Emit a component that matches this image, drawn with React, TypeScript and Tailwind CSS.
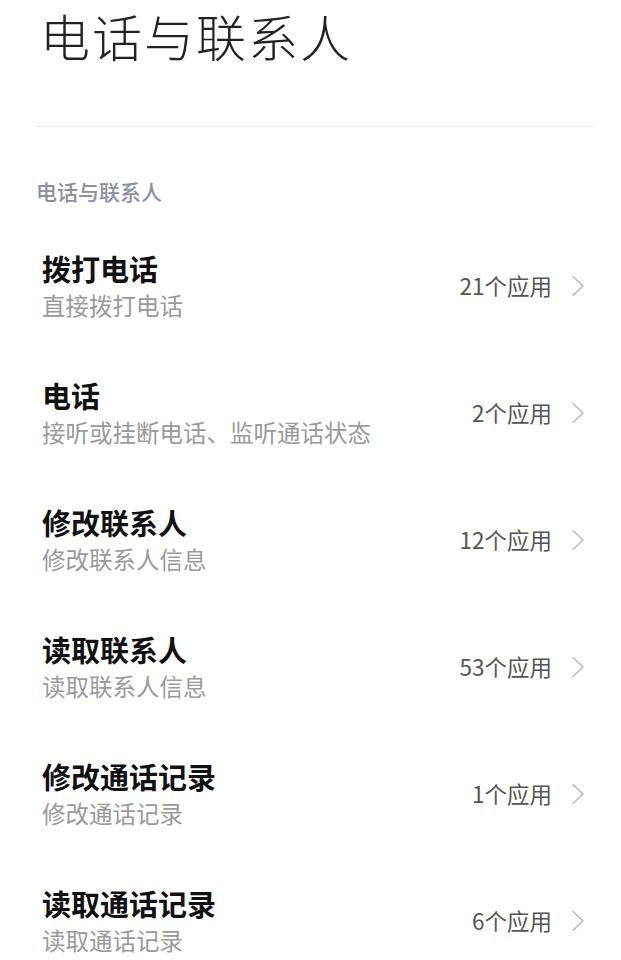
const rows = [
  { title: "拨打电话", desc: "直接拨打电话", count: 21 },
  { title: "电话", desc: "接听或挂断电话、监听通话状态", count: 2 },
  { title: "修改联系人", desc: "修改联系人信息", count: 12 },
  { title: "读取联系人", desc: "读取联系人信息", count: 53 },
  { title: "修改通话记录", desc: "修改通话记录", count: 1 },
  { title: "读取通话记录", desc: "读取通话记录", count: 6 },
];

function Chevron() {
  return (
    <svg width="14" height="22" viewBox="0 0 14 22" fill="none" className="ml-[19px]">
      <polyline
        points="2,1.5 12,11 2,20.5"
        stroke="#b8b8b8"
        strokeWidth="1.5"
        strokeLinecap="round"
        strokeLinejoin="round"
      />
    </svg>
  );
}

export default function App() {
  return (
    <div className="w-[621px] h-[960px] overflow-hidden bg-white font-['Noto_Sans_CJK_SC','Noto_Sans',sans-serif]">
      {/* Page header */}
      <h1 className="pl-[40px] pt-[10px] text-[50px] leading-none font-light tracking-[2px] text-[#222]">
        电话与联系人
      </h1>
      <div className="mt-[66px] ml-[35px] mr-[28px] h-px bg-[#ebebeb]"></div>

      {/* Section */}
      <div className="mt-[54px] pl-[36px] text-[21px] leading-none font-medium text-[#8b90a0]">
        电话与联系人
      </div>

      <div className="mt-[20px]">
        {rows.map((row) => (
          <div
            key={row.title}
            className="flex items-center justify-between pl-[42px] pr-[36px] py-[32px]"
          >
            <div className="flex flex-col">
              <span className="text-[29px] leading-none font-bold text-[#111]">
                {row.title}
              </span>
              <span className="mt-[10px] text-[23.5px] leading-[24px] text-[#9a9a9a]">
                {row.desc}
              </span>
            </div>
            <div className="flex items-center">
              <span className="text-[22.5px] leading-none text-[#555]">
                {row.count}个应用
              </span>
              <Chevron />
            </div>
          </div>
        ))}
      </div>
    </div>
  );
}
